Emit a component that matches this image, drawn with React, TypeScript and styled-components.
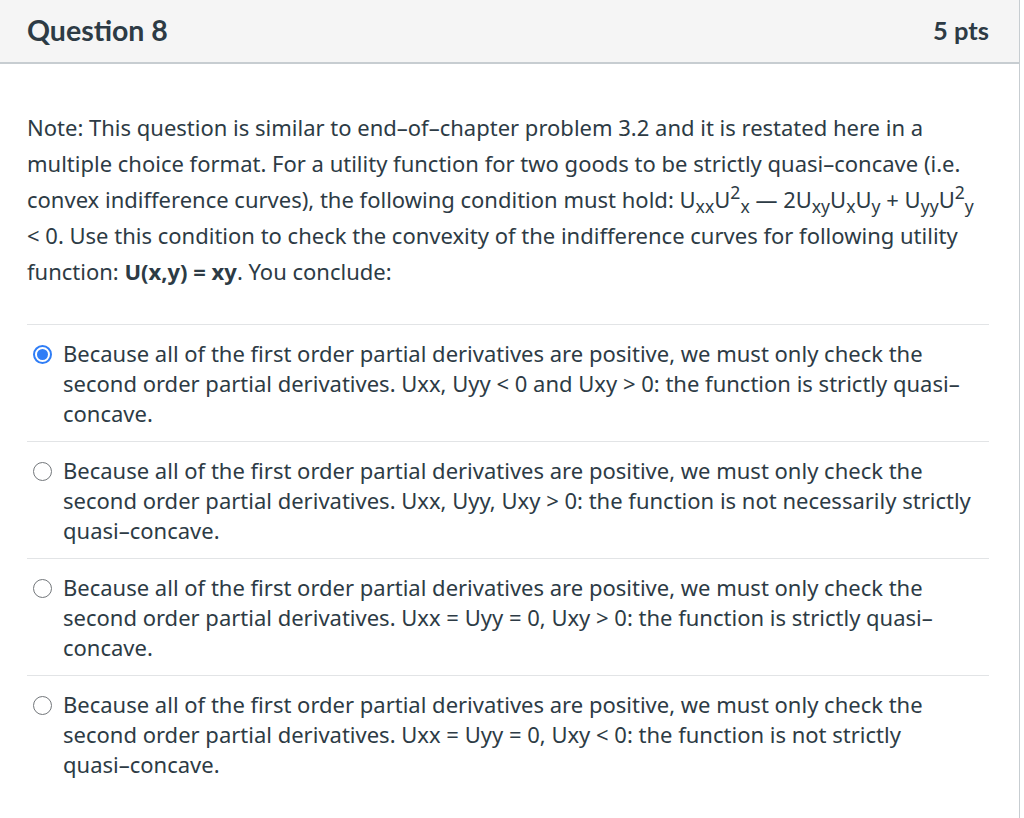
import React from "react";
import styled, { createGlobalStyle } from "styled-components";

const Global = createGlobalStyle`
  html, body { margin: 0; padding: 0; background: #ffffff; }
  body { font-family: "Noto Sans", "Liberation Sans", sans-serif; color: #2d3b45; }
`;

const Panel = styled.div`
  width: 1020px;
  height: 818px;
  border-right: 1px solid #c7cdd1;
  box-sizing: border-box;
  background: #fff;
  overflow: hidden;
`;

const Header = styled.div`
  height: 64px;
  box-sizing: border-box;
  background: #f5f5f5;
  border-bottom: 2px solid #c7cdd1;
  display: flex;
  align-items: center;
  justify-content: space-between;
  padding: 0 30px 2px 27px;
`;

const Title = styled.h2`
  margin: 0;
  font-family: Lato, "Open Sans", sans-serif;
  font-weight: 700;
  font-size: 28.5px;
  color: #2d3b45;
`;

const Points = styled.div`
  font-family: Lato, "Open Sans", sans-serif;
  font-weight: 700;
  font-size: 25.5px;
  color: #2d3b45;
`;

const Body = styled.div`
  padding: 45px 30px 0 27px;
`;

const Line = styled.span`
  display: block;
  white-space: nowrap;
`;

const Text = styled.div`
  margin: 0 0 35px;
  font-size: 22px;
  line-height: 36px;
  color: #2d3b45;
  sub, sup { font-size: 0.8em; line-height: 0; }
  sub { vertical-align: -0.3em; }
  sup { vertical-align: 0.5em; }
`;

const Answers = styled.div`
  display: flex;
  flex-direction: column;
`;

const Answer = styled.div`
  display: flex;
  align-items: flex-start;
  gap: 11px;
  border-top: 1px solid #e2e4e6;
  padding: 13px 0 13px 6px;
`;

const Radio = styled.span<{ $checked?: boolean }>`
  flex: none;
  width: 19px;
  height: 19px;
  margin-top: 7px;
  box-sizing: border-box;
  border-radius: 50%;
  border: ${(p) => (p.$checked ? "2px solid #2f7df6" : "1.5px solid #73777b")};
  background: #fff;
  display: flex;
  align-items: center;
  justify-content: center;
  &::after {
    content: "";
    display: ${(p) => (p.$checked ? "block" : "none")};
    width: 11px;
    height: 11px;
    border-radius: 50%;
    background: #2f7df6;
  }
`;

const AnswerText = styled.div`
  font-size: 22px;
  line-height: 30px;
  color: #2d3b45;
`;

const first = "Because all of the first order partial derivatives are positive, we must only check the";

const answers: string[][] = [
  [first, "second order partial derivatives. Uxx, Uyy < 0 and Uxy > 0: the function is strictly quasi–", "concave."],
  [first, "second order partial derivatives. Uxx, Uyy, Uxy > 0: the function is not necessarily strictly", "quasi–concave."],
  [first, "second order partial derivatives. Uxx = Uyy = 0, Uxy > 0: the function is strictly quasi–", "concave."],
  [first, "second order partial derivatives. Uxx = Uyy = 0, Uxy < 0: the function is not strictly", "quasi–concave."],
];

export default function App() {
  return (
    <>
      <Global />
      <Panel>
        <Header>
          <Title>Question 8</Title>
          <Points>5 pts</Points>
        </Header>
        <Body>
          <Text>
            <Line>Note: This question is similar to end–of–chapter problem 3.2 and it is restated here in a</Line>
            <Line>multiple choice format. For a utility function for two goods to be strictly quasi–concave (i.e.</Line>
            <Line>
              convex indifference curves), the following condition must hold: U<sub>xx</sub>U<sup>2</sup>
              <sub>x</sub> — 2U<sub>xy</sub>U<sub>x</sub>U<sub>y</sub> + U<sub>yy</sub>U<sup>2</sup>
              <sub>y</sub>
            </Line>
            <Line>&lt; 0. Use this condition to check the convexity of the indifference curves for following utility</Line>
            <Line>
              function: <b>U(x,y) = xy</b>. You conclude:
            </Line>
          </Text>
          <Answers>
            {answers.map((lines, i) => (
              <Answer key={i}>
                <Radio $checked={i === 0} />
                <AnswerText>
                  {lines.map((l, j) => (
                    <Line key={j}>{l}</Line>
                  ))}
                </AnswerText>
              </Answer>
            ))}
          </Answers>
        </Body>
      </Panel>
    </>
  );
}
